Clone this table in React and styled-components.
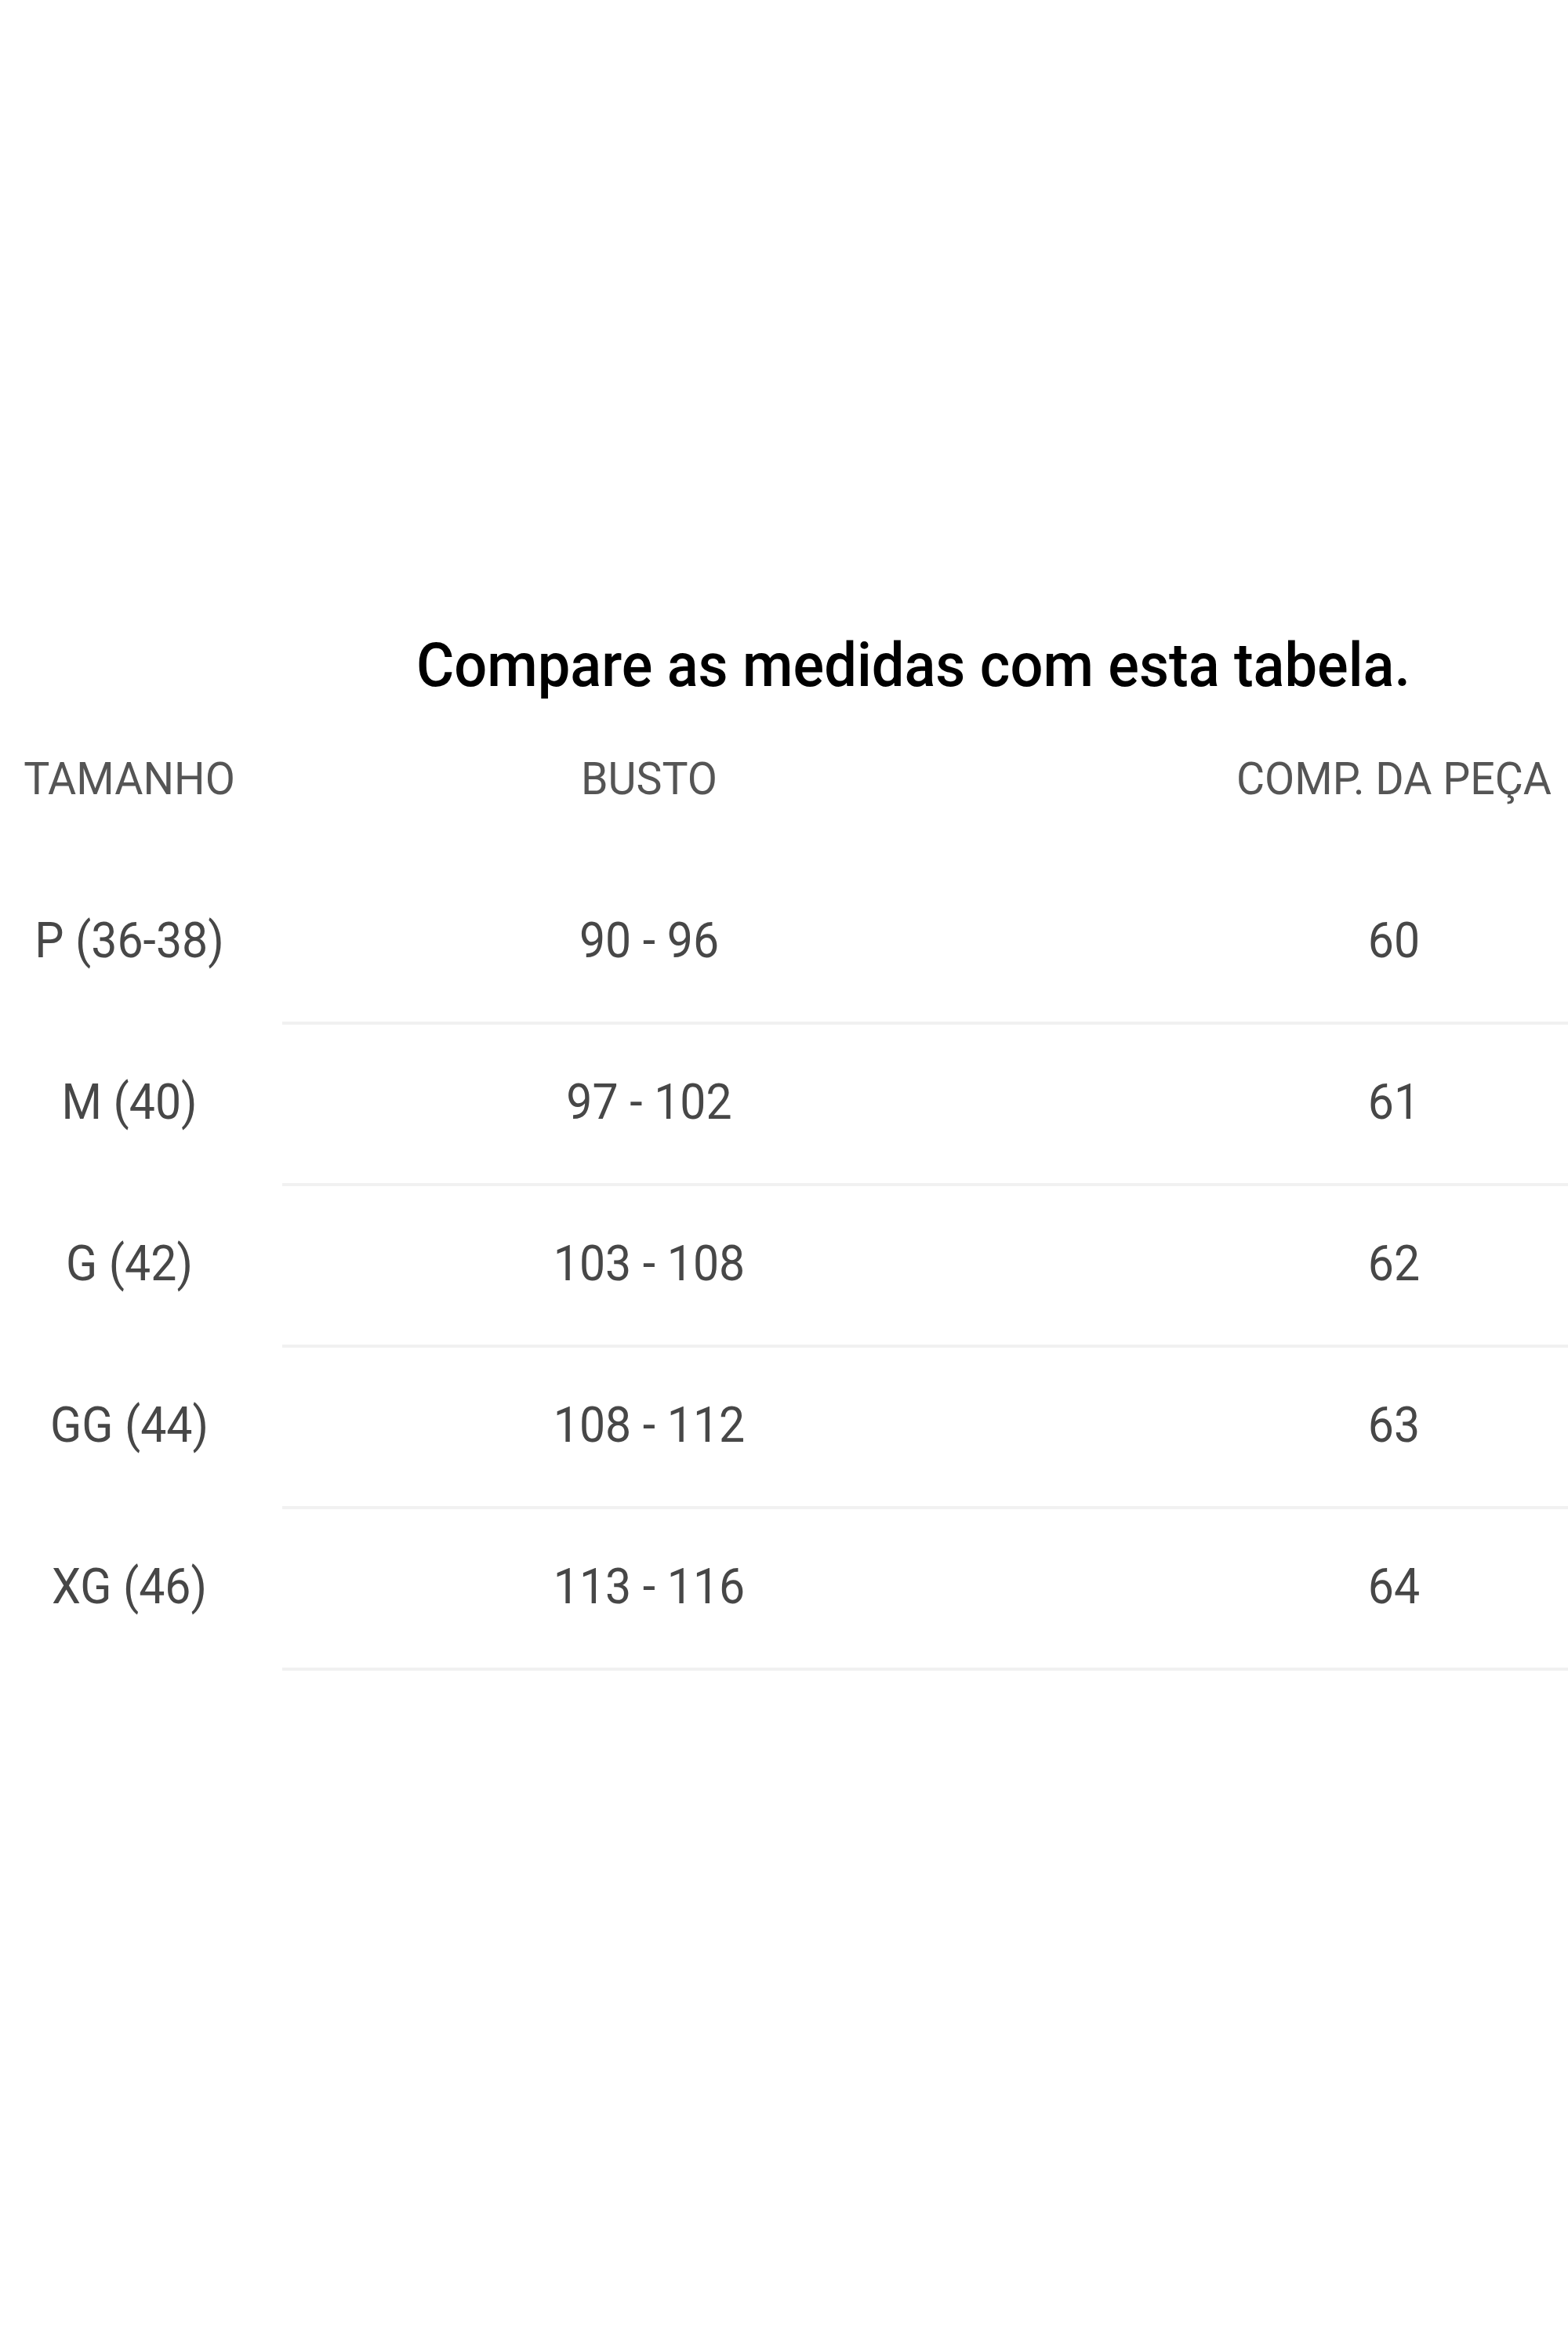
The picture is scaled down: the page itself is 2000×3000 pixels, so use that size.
import React from "react";
import styled, { createGlobalStyle } from "styled-components";

const Global = createGlobalStyle`
  html, body { margin: 0; padding: 0; background: #ffffff; }
  body { font-family: Roboto, "Liberation Sans", Arial, sans-serif; }
`;

const Page = styled.div`
  width: 2000px;
  min-height: 3000px;
  padding-top: 805px;
  box-sizing: border-box;
  background: #ffffff;
`;

const Title = styled.h1`
  margin: 0;
  padding-left: 330px;
  text-align: center;
  font-family: Roboto, "Liberation Sans", Arial, sans-serif;
  font-weight: 500;
  font-size: 74px;
  line-height: 88px;
  color: #000000;
  span {
    display: inline-block;
    transform: scaleY(1.04);
  }
`;

const Table = styled.div`
  display: flex;
  flex-direction: column;
  margin-top: 69px;
`;

const HeadRow = styled.div`
  display: flex;
  height: 64px;
  margin-bottom: 75px;
`;

const Row = styled.div`
  display: flex;
  height: 206px;
`;

const SizeCell = styled.div`
  width: 330px;
  margin-right: 30px;
  display: flex;
  align-items: center;
  justify-content: center;
  box-sizing: border-box;
  padding-bottom: ${(p) => (p.$head ? 0 : 8)}px;
`;

const Group = styled.div`
  flex: 1;
  display: flex;
  box-sizing: border-box;
  border-bottom: ${(p) => (p.$lined ? "4px solid #f1f1f1" : "none")};
`;

const Cell = styled.div`
  width: ${(p) => p.$w}px;
  margin-left: ${(p) => (p.$push ? "auto" : "0")};
  display: flex;
  align-items: center;
  justify-content: center;
  box-sizing: border-box;
  padding-bottom: ${(p) => (p.$head ? 0 : 4)}px;
`;

const HeadText = styled.span`
  display: inline-block;
  font-size: 55.5px;
  line-height: 64px;
  font-weight: 400;
  color: #555555;
  white-space: nowrap;
  transform: scaleY(1.04);
`;

const DataText = styled.span`
  display: inline-block;
  font-size: 59px;
  line-height: 68px;
  font-weight: 400;
  color: #474747;
  white-space: nowrap;
  transform: scaleY(1.07);
`;

const rows = [
  ["P (36-38)", "90 - 96", "60"],
  ["M (40)", "97 - 102", "61"],
  ["G (42)", "103 - 108", "62"],
  ["GG (44)", "108 - 112", "63"],
  ["XG (46)", "113 - 116", "64"],
];

export default function App() {
  return (
    <>
      <Global />
      <Page>
        <Title>
          <span>Compare as medidas com esta tabela.</span>
        </Title>
        <Table>
          <HeadRow>
            <SizeCell $head>
              <HeadText>TAMANHO</HeadText>
            </SizeCell>
            <Group>
              <Cell $w={936} $head>
                <HeadText>BUSTO</HeadText>
              </Cell>
              <Cell $w={444} $push $head>
                <HeadText>COMP. DA PEÇA</HeadText>
              </Cell>
            </Group>
          </HeadRow>
          {rows.map(([size, bust, len]) => (
            <Row key={size}>
              <SizeCell>
                <DataText>{size}</DataText>
              </SizeCell>
              <Group $lined>
                <Cell $w={936}>
                  <DataText>{bust}</DataText>
                </Cell>
                <Cell $w={444} $push>
                  <DataText>{len}</DataText>
                </Cell>
              </Group>
            </Row>
          ))}
        </Table>
      </Page>
    </>
  );
}
